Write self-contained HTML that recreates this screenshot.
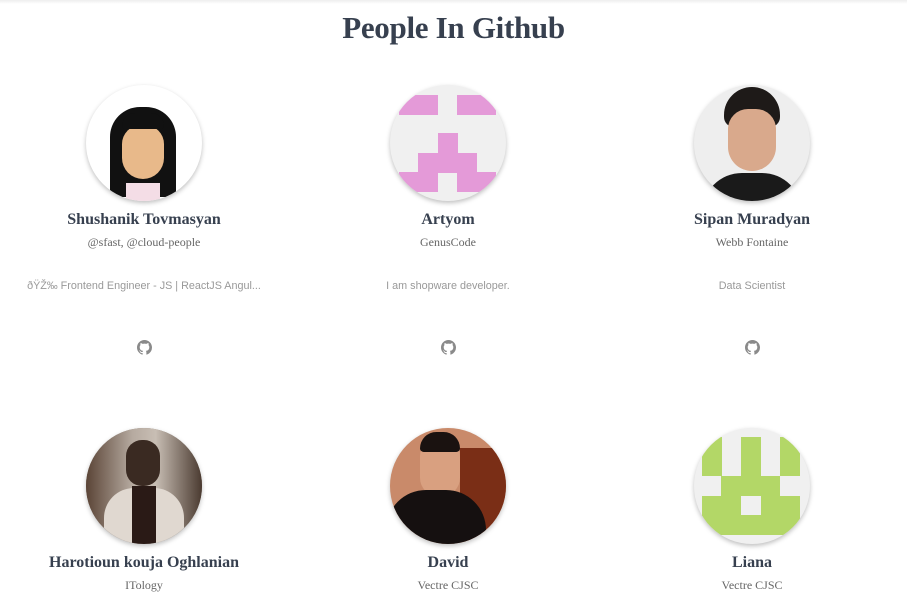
<!DOCTYPE html>
<html><head><meta charset="utf-8"><style>
body{margin:0;width:907px;height:592px;overflow:hidden;background:#fff;font-family:"Liberation Serif",serif;position:relative}
.top{position:absolute;left:0;top:0;width:907px;height:4px;background:linear-gradient(#eee,#fff)}
h1{position:absolute;top:10px;left:0;width:907px;text-align:center;margin:0;font-size:31px;font-weight:bold;color:#37404f;letter-spacing:-0.3px}
.av{position:absolute;width:116px;height:116px;border-radius:50%;overflow:hidden;box-shadow:0 2px 5px rgba(0,0,0,.25);background:#f0f0f0}
.n{position:absolute;width:300px;text-align:center;font-weight:bold;font-size:16px;color:#37404f}
.s{position:absolute;width:300px;text-align:center;font-size:12px;color:#666}
.b{position:absolute;width:300px;text-align:center;font-family:"Liberation Sans",sans-serif;font-size:10.8px;color:#999}
.g{position:absolute;width:15px;height:15px}
.px{position:absolute;width:19.6px;height:19.6px}
</style></head><body>
<div class="top"></div>
<h1>People In Github</h1>

<div class="av" style="left:86px;top:85px;background:#fff">
 <div style="position:absolute;left:24px;top:22px;width:66px;height:90px;background:#111;border-radius:30px 30px 6px 6px"></div>
 <div style="position:absolute;left:36px;top:40px;width:42px;height:54px;background:#e8b98a;border-radius:20px 20px 22px 22px"></div>
 <div style="position:absolute;left:36px;top:28px;width:42px;height:16px;background:#111;border-radius:20px 20px 4px 4px"></div>
 <div style="position:absolute;left:40px;top:98px;width:34px;height:20px;background:#f4dde6"></div>
</div>
<div class="av" style="left:390px;top:85px">
 <div class="px" style="left:9px;top:10px;width:39px;background:#e49ad8"></div>
 <div class="px" style="left:67px;top:10px;width:39px;background:#e49ad8"></div>
 <div class="px" style="left:48px;top:48px;background:#e49ad8"></div>
 <div class="px" style="left:28px;top:68px;width:59px;background:#e49ad8"></div>
 <div class="px" style="left:9px;top:87px;width:39px;background:#e49ad8"></div>
 <div class="px" style="left:67px;top:87px;width:39px;background:#e49ad8"></div>
</div>
<div class="av" style="left:694px;top:85px;background:#eee">
 <div style="position:absolute;left:30px;top:2px;width:56px;height:40px;background:#1e1a18;border-radius:28px 28px 10px 10px"></div>
 <div style="position:absolute;left:34px;top:24px;width:48px;height:62px;background:#d9a98c;border-radius:20px 20px 24px 24px"></div>
 <div style="position:absolute;left:8px;top:88px;width:100px;height:40px;background:#1a1a1a;border-radius:40px 40px 0 0"></div>
</div>
<div class="n" style="left:-6px;top:211px">Shushanik Tovmasyan</div>
<div class="n" style="left:298px;top:211px">Artyom</div>
<div class="n" style="left:602px;top:211px">Sipan Muradyan</div>
<div class="s" style="left:-6px;top:235px">@sfast, @cloud-people</div>
<div class="s" style="left:298px;top:235px">GenusCode</div>
<div class="s" style="left:602px;top:235px">Webb Fontaine</div>
<div class="b" style="left:-6px;top:280px">ðŸŽ‰ Frontend Engineer - JS | ReactJS Angul...</div>
<div class="b" style="left:298px;top:280px">I am shopware developer.</div>
<div class="b" style="left:602px;top:280px">Data Scientist</div>
<svg class="g" style="left:137px;top:340px" viewBox="0 0 16 16"><path fill="#8a8a8a" d="M8 0C3.58 0 0 3.58 0 8c0 3.54 2.29 6.53 5.47 7.59.4.07.55-.17.55-.38v-1.33c-2.23.48-2.7-1.07-2.7-1.07-.36-.92-.89-1.17-.89-1.17-.73-.5.05-.49.05-.49.8.06 1.230.83 1.23.83.71 1.22 1.87.87 2.33.66.07-.52.28-.87.51-1.07-1.78-.2-3.64-.89-3.64-3.95 0-.87.31-1.59.82-2.15-.08-.2-.36-1.02.08-2.12 0 0 .67-.21 2.2.82a7.6 7.6 0 014 0c1.53-1.04 2.2-.82 2.2-.82.44 1.1.16 1.92.08 2.12.51.56.82 1.27.82 2.15 0 3.07-1.87 3.75-3.65 3.95.29.25.54.73.54 1.48v2.2c0 .21.15.46.55.38A8.01 8.01 0 0016 8c0-4.42-3.58-8-8-8z"/></svg>
<svg class="g" style="left:441px;top:340px" viewBox="0 0 16 16"><path fill="#8a8a8a" d="M8 0C3.58 0 0 3.58 0 8c0 3.54 2.29 6.53 5.47 7.59.4.07.55-.17.55-.38v-1.33c-2.23.48-2.7-1.07-2.7-1.07-.36-.92-.89-1.17-.89-1.17-.73-.5.05-.49.05-.49.8.06 1.23.83 1.23.83.71 1.22 1.87.87 2.33.66.07-.52.28-.87.51-1.07-1.78-.2-3.64-.89-3.64-3.95 0-.87.31-1.59.82-2.15-.08-.2-.36-1.02.08-2.12 0 0 .67-.21 2.2.82a7.6 7.6 0 014 0c1.53-1.04 2.2-.82 2.2-.82.44 1.1.16 1.92.08 2.12.51.56.82 1.27.82 2.15 0 3.07-1.87 3.75-3.65 3.95.29.25.54.73.54 1.48v2.2c0 .21.15.46.55.38A8.01 8.01 0 0016 8c0-4.42-3.58-8-8-8z"/></svg>
<svg class="g" style="left:745px;top:340px" viewBox="0 0 16 16"><path fill="#8a8a8a" d="M8 0C3.58 0 0 3.58 0 8c0 3.54 2.29 6.53 5.47 7.59.4.07.55-.17.55-.38v-1.33c-2.23.48-2.7-1.07-2.7-1.07-.36-.92-.89-1.17-.89-1.17-.73-.5.05-.49.05-.49.8.06 1.23.83 1.23.83.71 1.22 1.87.87 2.33.66.07-.52.28-.87.51-1.07-1.78-.2-3.64-.89-3.64-3.95 0-.87.31-1.59.82-2.15-.08-.2-.36-1.02.08-2.12 0 0 .67-.21 2.2.82a7.6 7.6 0 014 0c1.53-1.04 2.2-.82 2.2-.82.44 1.1.16 1.92.08 2.12.51.56.82 1.27.82 2.15 0 3.07-1.87 3.75-3.65 3.95.29.25.54.73.54 1.48v2.2c0 .21.15.46.55.38A8.01 8.01 0 0016 8c0-4.42-3.58-8-8-8z"/></svg>

<div class="av" style="left:86px;top:428px;background:#8a7a6c">
 <div style="position:absolute;left:0;top:0;width:116px;height:116px;background:linear-gradient(90deg,#5a4436,#b6aaa0 40%,#c8beb4 60%,#4a3a30)"></div>
 <div style="position:absolute;left:40px;top:12px;width:34px;height:46px;background:#3a2a22;border-radius:16px"></div>
 <div style="position:absolute;left:18px;top:60px;width:80px;height:60px;background:#e0d8d0;border-radius:30px 30px 0 0"></div>
 <div style="position:absolute;left:46px;top:58px;width:24px;height:60px;background:#2a1a16"></div>
</div>
<div class="av" style="left:390px;top:428px;background:#c98a6a">
 <div style="position:absolute;left:70px;top:20px;width:46px;height:96px;background:#7a2e16"></div>
 <div style="position:absolute;left:30px;top:10px;width:40px;height:58px;background:#d9a080;border-radius:18px"></div>
 <div style="position:absolute;left:30px;top:4px;width:40px;height:20px;background:#1a1210;border-radius:18px 18px 4px 4px"></div>
 <div style="position:absolute;left:-4px;top:62px;width:100px;height:60px;background:#151010;border-radius:40px 40px 0 0"></div>
</div>
<div class="av" style="left:694px;top:428px">
 <div class="px" style="left:8px;top:9px;height:39px;background:#b3d767"></div>
 <div class="px" style="left:47px;top:9px;height:39px;background:#b3d767"></div>
 <div class="px" style="left:86px;top:9px;height:39px;background:#b3d767"></div>
 <div class="px" style="left:27px;top:48px;width:59px;background:#b3d767"></div>
 <div class="px" style="left:8px;top:68px;width:39px;background:#b3d767"></div>
 <div class="px" style="left:67px;top:68px;width:39px;background:#b3d767"></div>
 <div class="px" style="left:8px;top:87px;width:98px;background:#b3d767"></div>
</div>
<div class="n" style="left:-6px;top:554px">Harotioun kouja Oghlanian</div>
<div class="n" style="left:298px;top:554px">David</div>
<div class="n" style="left:602px;top:554px">Liana</div>
<div class="s" style="left:-6px;top:578px">ITology</div>
<div class="s" style="left:298px;top:578px">Vectre CJSC</div>
<div class="s" style="left:602px;top:578px">Vectre CJSC</div>
</body></html>
